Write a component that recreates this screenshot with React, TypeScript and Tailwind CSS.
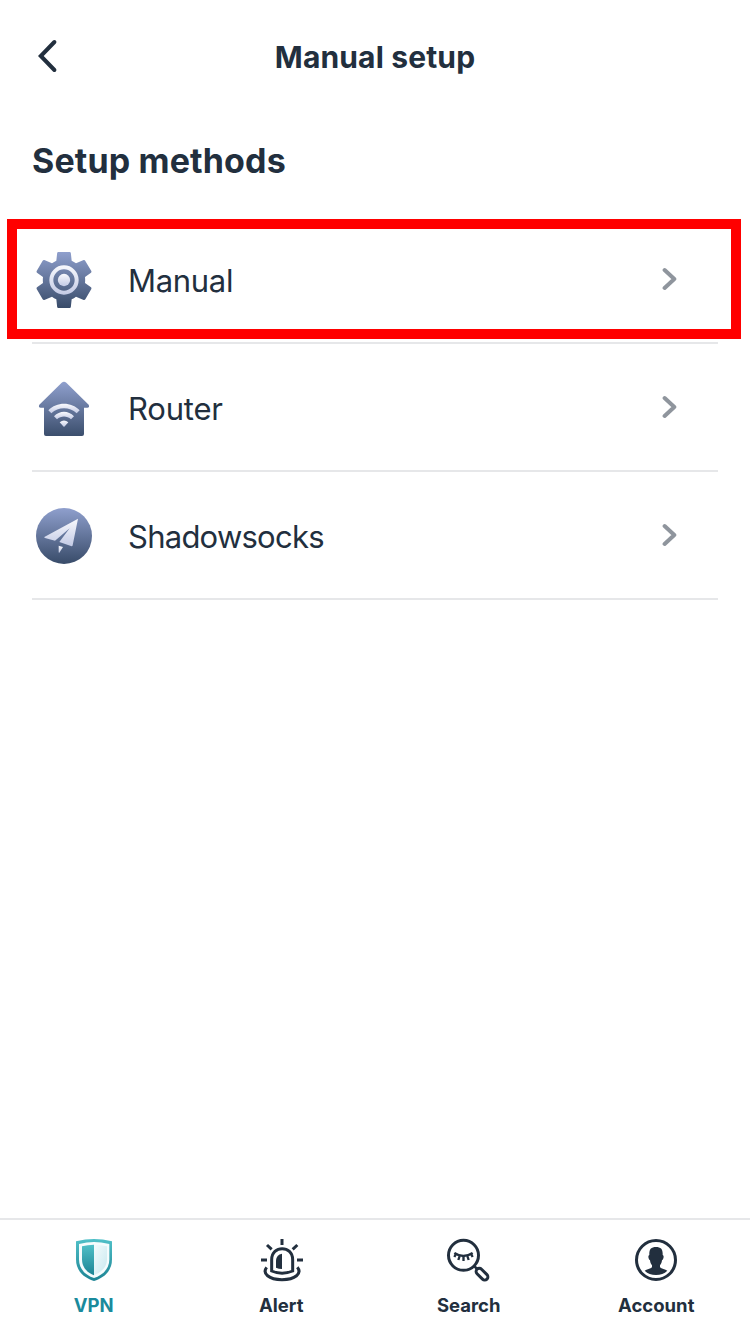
import type { ReactNode } from "react";

function Gradients() {
  return (
    <svg width="0" height="0" className="absolute" aria-hidden="true">
      <defs>
        <linearGradient id="slate" gradientUnits="userSpaceOnUse" x1="0" y1="36" x2="0" y2="204">
          <stop offset="0" stopColor="#8f9fcd" />
          <stop offset="1" stopColor="#384b69" />
        </linearGradient>
        <linearGradient id="frost" x1="0" y1="0" x2="0" y2="1">
          <stop offset="0" stopColor="#f8f9fd" />
          <stop offset="1" stopColor="#c3cae5" />
        </linearGradient>
        <linearGradient id="ring" gradientUnits="userSpaceOnUse" x1="0" y1="76" x2="0" y2="164">
          <stop offset="0" stopColor="#f8f9fd" />
          <stop offset="1" stopColor="#c3cae5" />
        </linearGradient>
        <linearGradient id="teal" x1="0" y1="0" x2="0" y2="1">
          <stop offset="0" stopColor="#50c0c8" />
          <stop offset="1" stopColor="#1c8494" />
        </linearGradient>
        <linearGradient id="ice" x1="0" y1="0" x2="1" y2="1">
          <stop offset="0" stopColor="#f4fbfd" />
          <stop offset="1" stopColor="#c8e9ef" />
        </linearGradient>
      </defs>
    </svg>
  );
}

function GearIcon() {
  return (
    <svg className="mt-0.5 size-16 shrink-0" viewBox="24 24 192 192">
      <path
        fill="url(#slate)"
        d="M103 36H137Q140 36 140.500 39L143 62Q150 65 156 70L179 60Q182 59 183.500 62L202 93Q203 96 201 98L183 111Q184 120 183 129L201 142Q203 144 202 147L184 178Q182 181 179 180L156 170Q150 175 143 178L140.500 201Q140 204 137 204H103Q100 204 99.500 201L97 178Q90 175 84 170L61 180Q58 181 56 178L38 147Q37 144 39 142L57 129Q56 120 57 111L39 98Q37 96 38 93L56 62Q58 59 61 60L84 70Q90 65 97 62L99.500 39Q100 36 103 36Z"
      />
      <circle cx="120" cy="120" r="38" fill="none" stroke="url(#ring)" strokeWidth="12" />
      <circle cx="120" cy="120" r="18.500" fill="url(#frost)" />
    </svg>
  );
}

function RouterIcon() {
  return (
    <svg className="mt-0.5 size-16 shrink-0" viewBox="24 18 192 192">
      <path
        fill="url(#slate)"
        d="M113 38Q120 32 127 38L194 104Q198 112 190 113H180V192Q180 198 174 198H66Q60 198 60 192V113H50Q42 112 46 104Z"
      />
      <path fill="url(#frost)" d="M73 121C98 95 142 95 167 121L158 130C137 110 103 110 82 130Z" />
      <path fill="url(#frost)" d="M90 139C107 121 133 121 150 139L141 148C129 137 111 137 99 148Z" />
      <path fill="url(#frost)" d="M107 157Q120 146 133 157L121 170Q120 171 119 170Z" />
    </svg>
  );
}

function ShadowsocksIcon() {
  return (
    <svg className="mt-0.5 size-16 shrink-0" viewBox="24 24 192 192">
      <circle cx="120" cy="120" r="84" fill="url(#slate)" />
      <path fill="url(#frost)" d="M162 68L61 123Q60 125 63 126L93 134L137 97L106 138L143 151Q146 151 146 148Z" />
      <path fill="url(#frost)" d="M104 149L117 153L106 170Q104 171 104 168Z" />
    </svg>
  );
}

function ShieldIcon() {
  return (
    <svg className="size-12" viewBox="60 78 144 144">
      <path fill="url(#teal)" d="M132 87Q158 87 186 94V148C186 184 161 204 132 213C103 204 78 184 78 148V94Q106 87 132 87Z" />
      <path fill="#f5fcfd" d="M132 96Q153 96 178 102V148C178 178 157 196 132 204C107 196 87 178 87 148V102Q111 96 132 96Z" />
      <path fill="url(#ice)" d="M132 104Q151 104 171 109V148C171 173 152 188 132 195Z" />
      <path fill="url(#teal)" d="M132 104Q113 105 96 109V148C96 173 112 188 132 196Z" />
    </svg>
  );
}

function AlertIcon() {
  return (
    <svg className="size-12" viewBox="51 78 144 144" fill="none" stroke="#222f3e" strokeWidth="9">
      <path d="M126 87V105M81 105L95 118M172 105L158 118M63 150H81M171 150H189" />
      <path d="M95 183V149C95 105 158 105 158 149V183Q126 197 95 183Z" />
      <path d="M80 172C66 190 86 209 126 209C166 209 187 190 172 172" />
      <path d="M126 131V177Q116 177 108 173V151Q109 134 126 131Z" fill="#222f3e" stroke="none" />
    </svg>
  );
}

function SearchIcon() {
  return (
    <svg className="size-12" viewBox="60 78 144 144" fill="none" stroke="#222f3e">
      <circle cx="115.500" cy="136" r="45" strokeWidth="9" />
      <path strokeWidth="8" d="M146 167L156 176" />
      <rect x="150" y="183" width="42" height="19" rx="9.500" transform="rotate(45 171 192.500)" strokeWidth="9" />
      <path strokeWidth="7.500" d="M88 129Q115 147 143 129" />
      <path strokeWidth="7" d="M94 130L88 141M137 130L143 141M104 138L100 150M115.500 139V153M127 138L131 150" />
    </svg>
  );
}

function AccountIcon() {
  return (
    <svg className="size-12" viewBox="81 78 144 144">
      <circle cx="153" cy="150" r="58.500" fill="none" stroke="#222f3e" strokeWidth="9" />
      <path
        fill="#222f3e"
        d="M153 111C168 111 174 118 173 135C178 136 176 149 171 151C170 160 167 164 165 166V172C169 177 181 178 187 182C178 191 167 195 153 195C139 195 128 191 119 182C125 178 137 177 141 172V166C139 164 136 160 135 151C130 149 128 136 133 135C132 118 138 111 153 111Z"
      />
    </svg>
  );
}

function MethodRow({ icon, children }: { icon: ReactNode; children: ReactNode }) {
  return (
    <li className="flex h-32 items-center border-b-2 border-[#e6e7e9] pr-10">
      {icon}
      <span className="ml-8 flex-1 pt-1">{children}</span>
      <svg className="h-6 w-4 shrink-0" viewBox="0 0 16 24" fill="none" stroke="#8f959d" strokeWidth="4" strokeLinecap="round" strokeLinejoin="round">
        <path d="M2.600 3L12.300 12L2.600 21" />
      </svg>
    </li>
  );
}

function Tab({ icon, children }: { icon: ReactNode; children: ReactNode }) {
  return (
    <a className="flex flex-col items-center pt-4">
      {icon}
      <span className="mt-[7px] whitespace-nowrap text-[18.500px] leading-7 font-bold">{children}</span>
    </a>
  );
}

export default function App() {
  return (
    <div className="relative flex h-[1334px] w-[750px] flex-col overflow-hidden bg-white font-['Inter',sans-serif] text-[#222f3e]">
      <Gradients />
      <header className="grid h-28 grid-cols-[1fr_auto_1fr] items-center px-8">
        <svg className="h-9 w-8" viewBox="0 0 32 36" fill="none" stroke="#222f3e" strokeWidth="4" strokeLinecap="round">
          <path d="M22.400 4L8.800 18L22.400 32" />
        </svg>
        <h1 className="pt-0.5 text-[30px] leading-10 font-bold">
          <span className="tracking-[0.15px]">Manual setup</span>
        </h1>
      </header>
      <main className="flex-1 px-8">
        <h2 className="h-[104px] pt-[25px] text-[34px] leading-12 font-bold">
          <span className="tracking-[0.15px]">Setup methods</span>
        </h2>
        <ul className="text-[31px] leading-10">
          <MethodRow icon={<GearIcon />}>
            <span className="tracking-[-0.3px]">Manual</span>
          </MethodRow>
          <MethodRow icon={<RouterIcon />}>
            <span className="tracking-[-0.2px]">Router</span>
          </MethodRow>
          <MethodRow icon={<ShadowsocksIcon />}>
            <span className="tracking-[-0.75px]">Shadowsocks</span>
          </MethodRow>
        </ul>
      </main>
      <nav className="grid h-[116px] grid-cols-4 border-t-2 border-[#e6e7e9]">
        <Tab icon={<ShieldIcon />}>
          <span className="text-[#1a8a9c]">VPN</span>
        </Tab>
        <Tab icon={<AlertIcon />}>Alert</Tab>
        <Tab icon={<SearchIcon />}>Search</Tab>
        <Tab icon={<AccountIcon />}>Account</Tab>
      </nav>
      <div className="pointer-events-none absolute top-[219px] left-[7px] h-[120px] w-[734px] border-[10px] border-[#ff0000]" />
    </div>
  );
}
